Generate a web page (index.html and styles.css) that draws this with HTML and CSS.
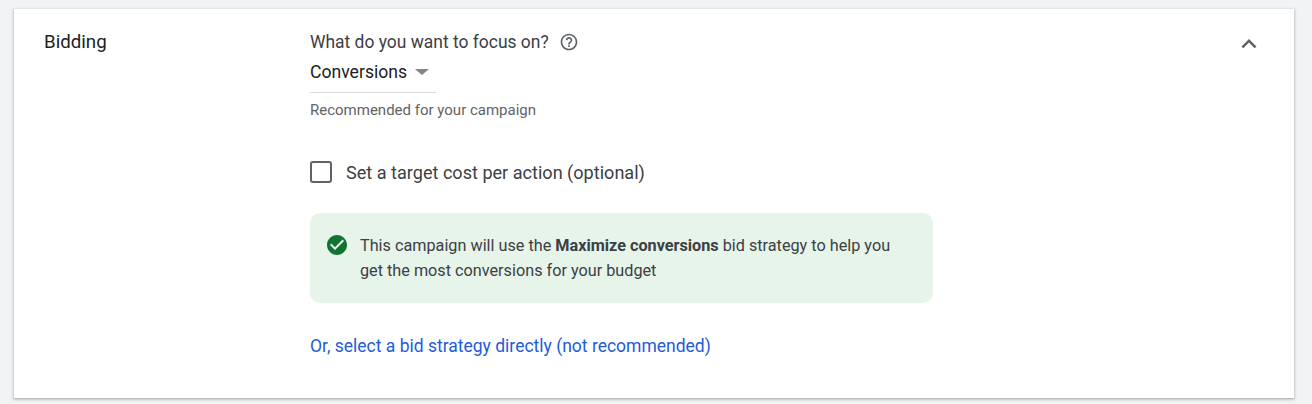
FILE: index.html
```html
<!DOCTYPE html>
<html lang="en">
<head>
<meta charset="utf-8">
<title>Bidding</title>
<link rel="stylesheet" href="styles.css">
</head>
<body>
<section class="card">
  <h2 class="title">Bidding</h2>
  <div class="content">
    <div class="question">
      <span>What do you want to focus on?</span>
      <svg class="help" viewBox="0 0 24 24" width="20" height="20"><path fill="#5f6368" d="M11 18h2v-2h-2v2zm1-16C6.48 2 2 6.48 2 12s4.48 10 10 10 10-4.48 10-10S17.52 2 12 2zm0 18c-4.41 0-8-3.59-8-8s3.59-8 8-8 8 3.59 8 8-3.59 8-8 8zm0-14c-2.21 0-4 1.79-4 4h2c0-1.1.9-2 2-2s2 .9 2 2c0 2-3 1.75-3 5h2c0-2.25 3-2.5 3-5 0-2.21-1.79-4-4-4z"/></svg>
    </div>
    <div class="select">
      <span>Conversions</span>
      <span class="caret"></span>
    </div>
    <div class="hint">Recommended for your campaign</div>
    <label class="check">
      <span class="box"></span>
      <span>Set a target cost per action (optional)</span>
    </label>
    <div class="notice">
      <svg class="ok" viewBox="0 0 24 24" width="24" height="24"><path fill="#137333" d="M12 2C6.48 2 2 6.48 2 12s4.48 10 10 10 10-4.48 10-10S17.52 2 12 2zm-2 15-5-5 1.41-1.41L10 14.17l7.59-7.59L19 8l-9 9z"/></svg>
      <p>This campaign will use the <b>Maximize conversions</b> bid strategy to help you get the most conversions for your budget</p>
    </div>
    <a class="link" href="#">Or, select a bid strategy directly (not recommended)</a>
  </div>
  <svg class="chevron" viewBox="0 0 24 24" width="30" height="30"><path fill="#5f6368" d="M7.41 15.41 12 10.83l4.59 4.58L18 14l-6-6-6 6z"/></svg>
</section>
</body>
</html>
```

FILE: styles.css
```css
html, body {
  margin: 0;
  height: 404px;
  overflow: hidden;
  background: #f1f3f4;
}
body {
  padding: 9px 18px 0 14px;
  box-sizing: border-box;
  font-family: Roboto, "Liberation Sans", sans-serif;
}
.card {
  display: flex;
  align-items: flex-start;
  height: 389px;
  box-sizing: border-box;
  padding: 21px 30px 0 30px;
  background: #fff;
  box-shadow: 0 1px 2px rgba(60,64,67,.3), 0 1px 3px 1px rgba(60,64,67,.15);
}
.title {
  width: 266px;
  margin: 0;
  font-size: 18.7px;
  font-weight: 400;
  line-height: 24px;
  color: #202124;
}
.content {
  display: flex;
  flex-direction: column;
  align-items: flex-start;
  width: 623px;
  flex: none;
}
.question {
  display: flex;
  align-items: center;
  gap: 10px;
  height: 24px;
  font-size: 17.45px;
  color: #3c4043;
}
.help { flex: none; }
.select {
  display: flex;
  align-items: center;
  gap: 8px;
  box-sizing: border-box;
  width: 126px;
  height: 34px;
  margin-top: 5px;
  padding-bottom: 8px;
  border-bottom: 1px solid #dadce0;
  font-size: 17.6px;
  color: #202124;
}
.caret {
  width: 0;
  height: 0;
  border-left: 7px solid transparent;
  border-right: 7px solid transparent;
  border-top: 6px solid #80868b;
}
.hint {
  margin-top: 7px;
  font-size: 15px;
  line-height: 20px;
  color: #5f6368;
}
.check {
  display: flex;
  align-items: center;
  gap: 14px;
  height: 24px;
  margin-top: 40px;
  font-size: 18.08px;
  color: #3c4043;
}
.box {
  box-sizing: border-box;
  width: 22px;
  height: 22px;
  border: 2.5px solid #5f6368;
  border-radius: 3px;
}
.notice {
  display: flex;
  gap: 11px;
  box-sizing: border-box;
  width: 623px;
  height: 90px;
  margin-top: 29px;
  padding: 20px 15px 19px;
  background: #e6f4ea;
  border-radius: 10px;
}
.ok { flex: none; }
.notice p {
  margin: 0;
  width: 540px;
  font-size: 16.23px;
  line-height: 25px;
  color: #3c4043;
}
.notice b { font-weight: 700; }
.link {
  margin-top: 31px;
  font-size: 17.5px;
  line-height: 24px;
  color: #1f5bd8;
  text-decoration: none;
}
.chevron {
  margin-left: auto;
  margin-top: -1px;
  flex: none;
}
```
